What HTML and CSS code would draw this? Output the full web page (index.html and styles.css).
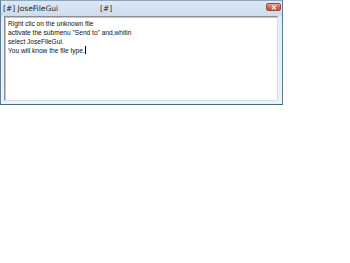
FILE: index.html
```html
<!DOCTYPE html>
<html lang="en">
<head>
  <meta charset="UTF-8"/>
  <title>JoseFileGui</title>
  <link rel="stylesheet" href="styles.css">
</head>
<body>
<div class="window">
  <div class="title-bar">
    <span class="title-text">[#] JoseFileGui</span>
    <span class="title-tag">[#]</span>
    <button class="close-btn">
      <svg width="6" height="5" viewBox="0 0 6 5"><path d="M1 0.5L5 4.5M5 0.5L1 4.5" stroke="#f6e3df" stroke-width="1.3"/></svg>
    </button>
  </div>
  <div class="client">
    <div class="memo">
      <div>Right clic on the unknown file</div>
      <div>activate the submenu "Send to" and,whitin</div>
      <div>select JoseFileGui.</div>
      <div>You will know the file type.<span class="caret"></span></div>
    </div>
  </div>
</div>
</body>
</html>
```

FILE: styles.css
```css
body {
  margin: 0;
  background-color: #fff;
  font-family: Tahoma, "DejaVu Sans", sans-serif;
}
.window {
  width: 281px;
  height: 103px;
  border: 1px solid #5d7f93;
  border-top-color: #8ea6bc;
  border-bottom-color: #3f6b78;
  background: linear-gradient(#dde8f4, #cfdcec 15px, #e4ecf5 16px, #eef2f7);
  display: flex;
  flex-direction: column;
}
.title-bar {
  height: 15px;
  display: flex;
  align-items: center;
  padding-left: 2px;
  font-size: 7.5px;
  color: #1b1b1b;
}
.title-text {
  width: 97px;
}
.title-tag {
  flex: 1;
}
.close-btn {
  width: 15px;
  height: 8px;
  margin-right: 1px;
  margin-bottom: 3px;
  border: 1px solid #9a4a40;
  border-radius: 2px;
  background: linear-gradient(#e7a394, #d06a57 50%, #c0503d);
  display: flex;
  align-items: center;
  justify-content: center;
  padding: 0;
}
.client {
  flex: 1;
  padding: 0 4px 3px 3px;
  display: flex;
}
.memo {
  flex: 1;
  background-color: #fff;
  border: 1px solid #8a8f95;
  border-right-color: #d8dde3;
  border-bottom-color: #d8dde3;
  box-shadow: inset 1px 1px 0 #c2c6cb;
  padding: 2px 3px;
  font-family: "Liberation Sans", Arial, sans-serif;
  font-size: 6.6px;
  line-height: 9px;
  color: #111;
}
.caret {
  display: inline-block;
  width: 1px;
  height: 8px;
  background-color: #000;
  vertical-align: -1px;
}
```
